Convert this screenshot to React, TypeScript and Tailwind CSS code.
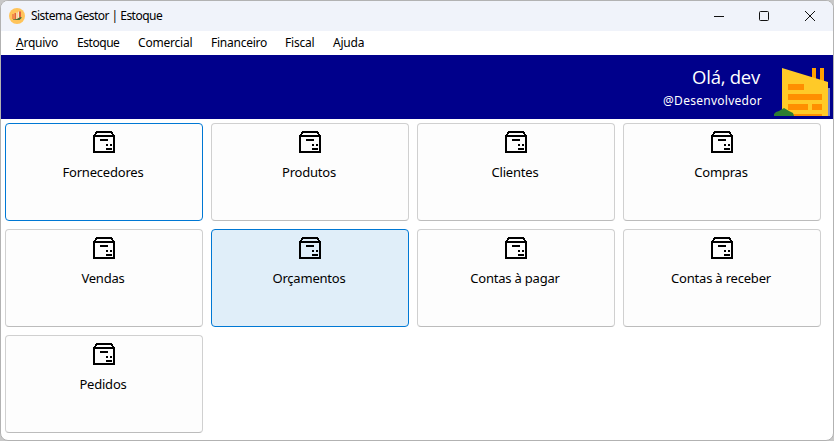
type CardState = 'normal' | 'focused' | 'selected';

const menus = [
  { label: 'Arquivo', style: 'w-[61px] tracking-[-0.25px]' },
  { label: 'Estoque', style: 'w-[61px] tracking-[-0.45px]' },
  { label: 'Comercial', style: 'w-[73px] tracking-[-0.2px]' },
  { label: 'Financeiro', style: 'w-[74px] tracking-[-0.25px]' },
  { label: 'Fiscal', style: 'w-[48px] tracking-[-0.2px]' },
  { label: 'Ajuda', style: 'w-[50px] tracking-[-0.2px]' },
];

const cards: { label: string; state: CardState }[] = [
  { label: 'Fornecedores', state: 'focused' },
  { label: 'Produtos', state: 'normal' },
  { label: 'Clientes', state: 'normal' },
  { label: 'Compras', state: 'normal' },
  { label: 'Vendas', state: 'normal' },
  { label: 'Orçamentos', state: 'selected' },
  { label: 'Contas à pagar', state: 'normal' },
  { label: 'Contas à receber', state: 'normal' },
  { label: 'Pedidos', state: 'normal' },
];

const cardStyles: Record<CardState, string> = {
  normal: 'border-[#d0d0d0] border-b-[#bcbcbc] bg-[#fdfdfd]',
  focused: 'border-[#0078d4] bg-[#fdfdfd]',
  selected: 'border-[#0078d4] bg-[#e0eef9]',
};

function AppIcon() {
  return (
    <svg width="16" height="16" viewBox="0 0 16 16">
      <circle cx="8" cy="8" r="8" fill="#ffc45a" />
      <path d="M3 6h2v5H3z" fill="#f08a4b" />
      <path d="M5.5 5h1.8v6H5.5z" fill="#e2603f" />
      <path d="M7.3 4.5h1.2V11H7.3z" fill="#f7e6cc" />
      <path d="M9.5 3.5H12V9H9.5z" fill="#e2603f" />
      <path d="M9 3.5h1V10H9z" fill="#f7e6cc" />
      <path d="m4 11.5 4-.5 3-2 2 .5-2.5 2.5H4z" fill="#456b37" />
    </svg>
  );
}

function BoxIcon() {
  return (
    <svg width="22" height="22" viewBox="0 0 22 22" shapeRendering="crispEdges" className="shrink-0">
      <path
        d="M3 0h16v1h1v2h1v1h1v18H0V4h1V3h1V1h1zM4 2v1H3v1h16V3h-1V2zM2 6v14h18V6z"
        fillRule="evenodd"
      />
      <path d="M7 8h8v2H7zM13 13h2v2h-2zM17 13h2v2h-2zM13 17h6v2h-6z" />
    </svg>
  );
}

function Building() {
  return (
    <svg width="56" height="49" viewBox="0 0 56 49">
      <path d="M52 20h4v28h-4z" fill="#7986cb" />
      <path d="M38 0h4v16h-4zM46 0h4v16h-4z" fill="#ffa000" />
      <path d="M8 0 54 14v34H8z" fill="#ffca28" />
      <path d="M14 16h16v6H14zM14 26h34v6H14zM14 36h20v6H14zM38 36h10v6H38zM14 46h34v2H14z" fill="#ff8f00" />
      <path d="M0 48v-2l2-2 3-1 5-3 5 3 4 2 1 3z" fill="#2e7d32" />
    </svg>
  );
}

export default function App() {
  return (
    <div className="h-[441px] w-[834px] bg-[#c8c8c8] font-['Noto_Sans','Open_Sans',sans-serif] text-black">
      <div className="flex h-full flex-col overflow-hidden rounded-[8px] border border-[#b2b2b2] bg-white">
        <header className="flex h-[30px] shrink-0 items-center justify-between bg-[#f0f3fa] pl-2">
          <div className="flex items-center gap-[6px]">
            <AppIcon />
            <span className="text-[12px] leading-4 tracking-[-0.53px]">Sistema Gestor | Estoque</span>
          </div>
          <svg width="137" height="28" viewBox="0 0 137 28" fill="none" stroke="#111">
            <path d="M18 14.5h10" />
            <rect x="63.5" y="9.5" width="9" height="9" rx="1" />
            <path d="m109 9 10 10m0-10-10 10" />
          </svg>
        </header>
        <nav className="flex h-6 shrink-0 items-center pl-[15px] text-[12px] leading-4">
          {menus.map(({ label, style }, i) => (
            <span key={label} className={`whitespace-nowrap ${style}`}>
              {i === 0 ? <><u className="underline-offset-2">A</u>rquivo</> : label}
            </span>
          ))}
        </nav>
        <section className="flex h-16 shrink-0 justify-end bg-[#00008b] pr-[3px] text-white">
          <div className="flex flex-col items-end pt-[9px] pr-3">
            <span className="pr-[2px] font-['Open_Sans','Noto_Sans',sans-serif] text-[18.5px] leading-[26px] tracking-[-0.25px]">Olá, dev</span>
            <span className="mt-[3px] text-[12px] leading-4 tracking-[0.27px]">@Desenvolvedor</span>
          </div>
          <div className="pt-[13px]"><Building /></div>
        </section>
        <main className="grid grid-cols-[repeat(4,198px)] gap-2 pt-1 pl-1">
          {cards.map(({ label, state }) => (
            <button key={label} className={`flex h-[98px] flex-col items-center rounded-[4px] border pt-[7px] ${cardStyles[state]}`}>
              <BoxIcon />
              <span className="mt-[10px] pr-[2px] text-[13px] leading-[18px] tracking-[-0.2px]">{label}</span>
            </button>
          ))}
        </main>
      </div>
    </div>
  );
}
